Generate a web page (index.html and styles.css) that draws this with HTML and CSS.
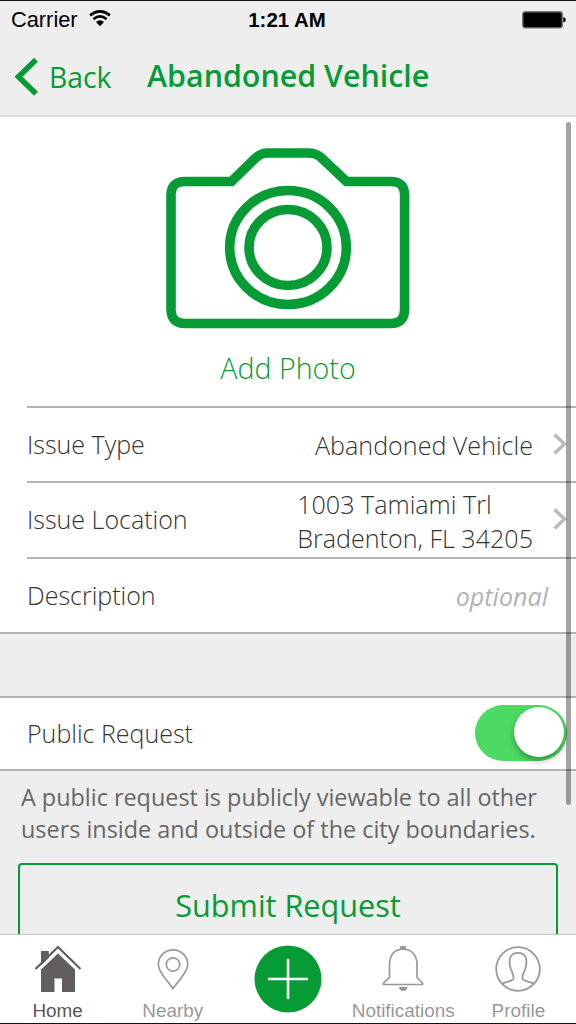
FILE: index.html
```html
<!DOCTYPE html>
<html lang="en">
<head>
<meta charset="utf-8">
<title>Abandoned Vehicle</title>
<link rel="stylesheet" href="styles.css">
</head>
<body>
<div class="screen">
  <header class="header">
    <div class="status">
      <div class="carrier"><span class="t">Carrier</span>
        <svg class="wifi" width="22" height="17" viewBox="0 0 22 17"><g fill="none" stroke="#000" stroke-width="2.7"><path d="M1 5.4Q11-2.6 21 5.4"/><path d="M4.4 9.2Q11 3.6 17.6 9.2"/></g><path d="M7 12.1Q11 8.6 15 12.1L11 16.2Z"/></svg>
      </div>
      <span class="t clock">1:21 AM</span>
      <svg class="battery" width="44" height="18" viewBox="0 0 44 18"><rect x=".7" y=".7" width="39.6" height="16.2" rx="2.6" fill="#000" stroke="#777" stroke-width="1.4"/><path d="M41.3 6Q43.8 6.5 43.8 8.8T41.3 11.6Z"/></svg>
    </div>
    <nav class="navbar">
      <svg class="back-arrow" width="24" height="38" viewBox="0 0 24 38"><path d="M22 1.8L4.5 18.8L22 35.8" fill="none" stroke="#069b34" stroke-width="5.6"/></svg>
      <a class="back t">Back</a>
      <h1 class="title t">Abandoned Vehicle</h1>
    </nav>
  </header>

  <main class="content">
    <section class="photo">
      <svg class="camera" width="244" height="181" viewBox="0 0 244 181"><g fill="none" stroke="#069b34" stroke-width="9.6"><path d="M19 33.5H65.5L89 10.5Q95 5 101 5H142Q150 5 155 9.5L180.5 33.5H225Q238.6 33.5 238.6 47V161Q238.6 175.500 225 175.500H19Q5 175.500 5 161V47Q5 33.500 19 33.500Z"/><ellipse cx="122" cy="99.500" rx="58.300" ry="57"/><ellipse cx="122" cy="99.500" rx="39" ry="38"/></g></svg>
      <span class="add t">Add Photo</span>
    </section>
    <div class="rows">
      <div class="row"><span class="label t">Issue Type</span><span class="value t">Abandoned Vehicle</span>
        <svg class="chev" width="14" height="22" viewBox="0 0 14 22"><path d="M1.500 1.500L11.500 11L1.500 20.500" fill="none" stroke="#bbb" stroke-width="3.600"/></svg></div>
      <div class="row location"><span class="label t">Issue Location</span><span class="value t">1003 Tamiami Trl<br>Bradenton, FL 34205</span>
        <svg class="chev" width="14" height="22" viewBox="0 0 14 22"><path d="M1.500 1.500L11.500 11L1.500 20.500" fill="none" stroke="#bbb" stroke-width="3.600"/></svg></div>
      <div class="row"><span class="label t">Description</span><span class="hint t">optional</span></div>
    </div>
    <div class="public"><span class="label t">Public Request</span><span class="switch"><span class="knob"></span></span></div>
    <p class="note t">A public request is publicly viewable to all other<br>users inside and outside of the city boundaries.</p>
    <div class="submit t">Submit Request</div>
    <div class="scrollbar"></div>
  </main>

  <footer class="tabs">
    <div class="tab home"><svg width="48" height="49" viewBox="0 0 48 49"><path d="M7 6H14.800V13L7 20.500Z" fill="#635e5e"/><path d="M24 8.500L41 24.500V47H28V33.500H20.500V47H7V24.500Z" fill="#635e5e"/><path d="M1.500 24L24 2L46.500 24" fill="none" stroke="#635e5e" stroke-width="2.200"/></svg><span class="t">Home</span></div>
    <div class="tab"><svg width="48" height="49" viewBox="0 0 48 49"><g fill="none" stroke="#999" stroke-width="1.700"><path d="M24 43.500C20 37 9.300 28 9.300 19.500A14.700 14.700 0 0 1 38.700 19.500C38.700 28 28 37 24 43.500Z"/><circle cx="24" cy="19.500" r="6.700"/></g></svg><span class="t">Nearby</span></div>
    <div class="tab plus"><svg width="68" height="68" viewBox="0 0 68 68"><circle cx="34" cy="34" r="33.500" fill="#069b34"/><path d="M14 34H54M34 14V54" stroke="#fff" stroke-width="2.600"/></svg></div>
    <div class="tab"><svg width="48" height="49" viewBox="0 0 48 49"><path d="M10.500 32.500V19C11 9.500 16 4.500 24 4C32 4.500 37.500 9.500 38 19V32.500L43.500 38V39.500H4.500V38Z" fill="none" stroke="#999" stroke-width="1.700"/><path d="M21.500 4V1.500H26.500V4ZM20.500 42.500H28Q28 45.500 24.200 45.500T20.500 42.500Z" fill="#999" stroke="#999"/></svg><span class="t">Notifications</span></div>
    <div class="tab"><svg width="48" height="49" viewBox="0 0 48 49"><g fill="none" stroke="#999" stroke-width="1.800"><circle cx="24" cy="24" r="21.800"/><path d="M8 38.500C13 36.500 19 36 19.500 33.500C20 30 18.500 28.500 16.800 24C15.500 20 15.200 15 16.500 12C19 6.500 29 6.500 31.500 12C32.800 15 32.500 20 31.200 24C29.500 28.500 28 30 28.500 33.500C29 36 35 36.500 40 38.500"/></g></svg><span class="t">Profile</span></div>
  </footer>
</div>
</body>
</html>
```
FILE: styles.css
```css
* { box-sizing: border-box; }
body { margin: 0; background: #eee; font-family: "Open Sans", sans-serif; color: #333; }
svg { display: block; flex: none; }
.t { white-space: nowrap; }
.screen { width: 576px; height: 1024px; display: flex; flex-direction: column; overflow: hidden; border-top: 1px solid #111; border-bottom: 1px solid #111; }
.header { height: 116px; flex: none; border-bottom: 2px solid #dedede; }
.status { display: grid; grid-template-columns: 1fr auto 1fr; align-items: center; height: 38px; padding: 0 10px 0 11px; font-family: "Liberation Sans", Arial, sans-serif; font-size: 21.8px; color: #000; }
.carrier { display: flex; align-items: center; gap: 11px; }
.wifi { margin-top: -4px; }
.clock { font-weight: bold; font-size: 20.4px; margin-right: 3px; }
.battery { justify-self: end; margin-top: -1px; }
.navbar { display: flex; align-items: center; height: 75px; padding-left: 14px; color: #069b34; }
.back { margin-left: 11px; width: 98px; font-size: 28.3px; }
.title { margin: -2px 0 0; font-size: 30.4px; font-weight: 600; }
.content { position: relative; height: 817px; flex: none; overflow: hidden; }
.photo { height: 289px; background: #fff; display: flex; flex-direction: column; align-items: center; padding-top: 31px; }
.add { margin-top: 19px; font-size: 28.6px; line-height: 40px; font-weight: 300; color: #069b34; }
.rows { background: #fff; padding-left: 27px; border-bottom: 2px solid #b4b4b4; font-size: 25.1px; font-weight: 300; }
.row { height: 75px; border-top: 2px solid #b4b4b4; display: flex; align-items: center; }
.location { height: 76px; }
.label { flex: 1; padding-bottom: 1px; font-size: 25px; }
.location .label { padding-bottom: 3px; }
.value { margin-right: 20px; line-height: 34px; padding-top: 1px; }
.chev { margin: 0 9px 2px 0; }
.hint { margin-right: 28px; padding-top: 1px; color: #b2b2b2; font-style: italic; font-weight: 400; }
.public { height: 75px; margin-top: 62px; padding: 0 9px 2px 27px; background: #fff; border: solid #b4b4b4; border-width: 2px 0; display: flex; align-items: center; font-weight: 300; }
.public .label { padding-bottom: 0; }
.switch { width: 92px; height: 56px; border-radius: 28px; background: #4cd964; display: flex; justify-content: flex-end; padding: 2px 3px 3px; }
.knob { width: 50px; height: 50px; border-radius: 50%; background: #fff; box-shadow: 0 4px 6px rgba(0,0,0,.3); }
.note { margin: 10px 0 0 21px; font-size: 23.4px; line-height: 32px; color: #666; }
.submit { margin: 18px 18px 0; height: 90px; border: 2px solid #069b34; border-radius: 4px; color: #069b34; font-size: 30.6px; line-height: 80px; text-align: center; }
.scrollbar { position: absolute; left: 566px; top: 5px; width: 5px; height: 683px; border-radius: 3px; background: rgba(0,0,0,.36); }
.tabs { flex: 1; display: grid; grid-template-columns: repeat(5, 1fr); background: #fff; border-top: 1px solid #c4c4c4; font-family: "Liberation Sans", Arial, sans-serif; font-size: 18.9px; color: #999; }
.tab { display: flex; flex-direction: column; align-items: center; padding-top: 10px; }
.tab .t { margin-top: 6px; }
.home { color: #5a5555; }
```
